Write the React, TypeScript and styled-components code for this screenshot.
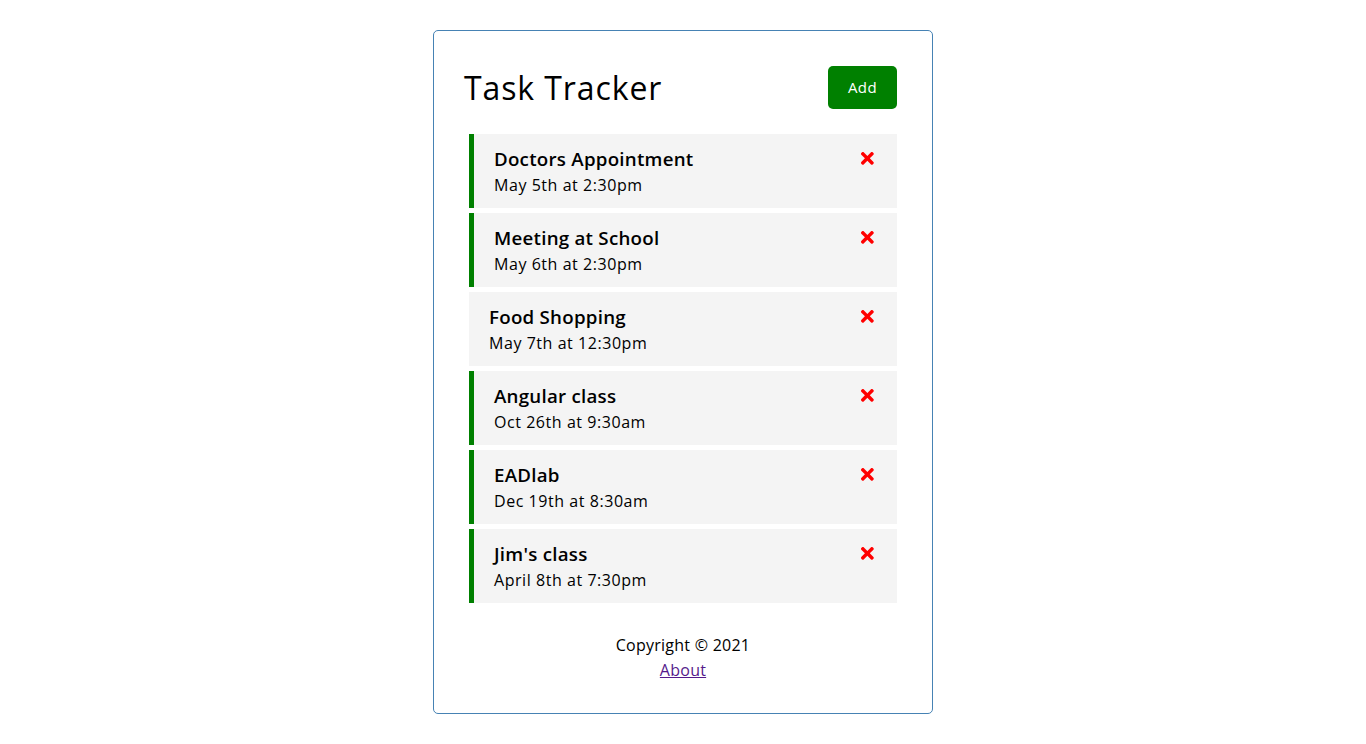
import React from 'react';
import styled, { createGlobalStyle } from 'styled-components';
import { FaTimes } from 'react-icons/fa';

const GlobalStyle = createGlobalStyle`
    * {
        box-sizing: border-box;
        margin: 0;
        padding: 0;
    }

    body {
        font-family: 'Open Sans', 'Noto Sans', sans-serif;
        background: #fff;
        color: #000;
    }
`;

const Container = styled.div`
    max-width: 500px;
    margin: 30px auto;
    overflow: auto;
    min-height: 300px;
    border: 1px solid steelblue;
    padding: 30px;
    border-radius: 5px;
`;

const Header = styled.header`
    display: flex;
    justify-content: space-between;
    align-items: center;
    margin-bottom: 20px;

    h1 {
        font-size: 32px;
        font-weight: 500;
        line-height: 48px;
        letter-spacing: 0.9px;
    }
`;

const Button = styled.button<{ $color: string }>`
    display: inline-block;
    background: ${p => p.$color};
    color: #fff;
    border: none;
    padding: 10px 20px;
    margin: 5px;
    border-radius: 5px;
    cursor: pointer;
    font-size: 15px;
    line-height: 23px;
    font-family: inherit;
    font-weight: 500;
    letter-spacing: 0.4px;
`;

const TaskItem = styled.div<{ $reminder: boolean }>`
    background: #f4f4f4;
    margin: 5px;
    padding: 10px 20px;
    cursor: pointer;
    border-left: ${p => (p.$reminder ? '5px solid green' : 'none')};

    h3 {
        display: flex;
        align-items: center;
        justify-content: space-between;
        font-size: 18.72px;
        font-weight: 600;
        line-height: 29px;
        letter-spacing: 0.25px;
    }

    p {
        font-size: 16px;
        line-height: 25px;
        letter-spacing: 0.55px;
    }
`;

const DeleteIcon = styled(FaTimes)`
    color: red;
    cursor: pointer;
    font-size: 18.72px;
`;

const Footer = styled.footer`
    margin-top: 30px;
    text-align: center;
    font-size: 16px;
    line-height: 25px;
    letter-spacing: 0.25px;

    a {
        color: #551a8b;
    }
`;

type Task = { id: number; text: string; day: string; reminder: boolean };

const tasks: Task[] = [
    { id: 1, text: 'Doctors Appointment', day: 'May 5th at 2:30pm', reminder: true },
    { id: 2, text: 'Meeting at School', day: 'May 6th at 2:30pm', reminder: true },
    { id: 3, text: 'Food Shopping', day: 'May 7th at 12:30pm', reminder: false },
    { id: 4, text: 'Angular class', day: 'Oct 26th at 9:30am', reminder: true },
    { id: 5, text: 'EADlab', day: 'Dec 19th at 8:30am', reminder: true },
    { id: 6, text: "Jim's class", day: 'April 8th at 7:30pm', reminder: true },
];

function App() {
    return (
        <>
            <GlobalStyle />
            <Container>
                <Header>
                    <h1>Task Tracker</h1>
                    <Button $color='green'>Add</Button>
                </Header>
                <div>
                    {tasks.map(task => (
                        <TaskItem key={task.id} $reminder={task.reminder}>
                            <h3>
                                {task.text} <DeleteIcon />
                            </h3>
                            <p>{task.day}</p>
                        </TaskItem>
                    ))}
                </div>
                <Footer>
                    <p>Copyright &copy; 2021</p>
                    <a href='#about'>About</a>
                </Footer>
            </Container>
        </>
    );
}

export default App;
